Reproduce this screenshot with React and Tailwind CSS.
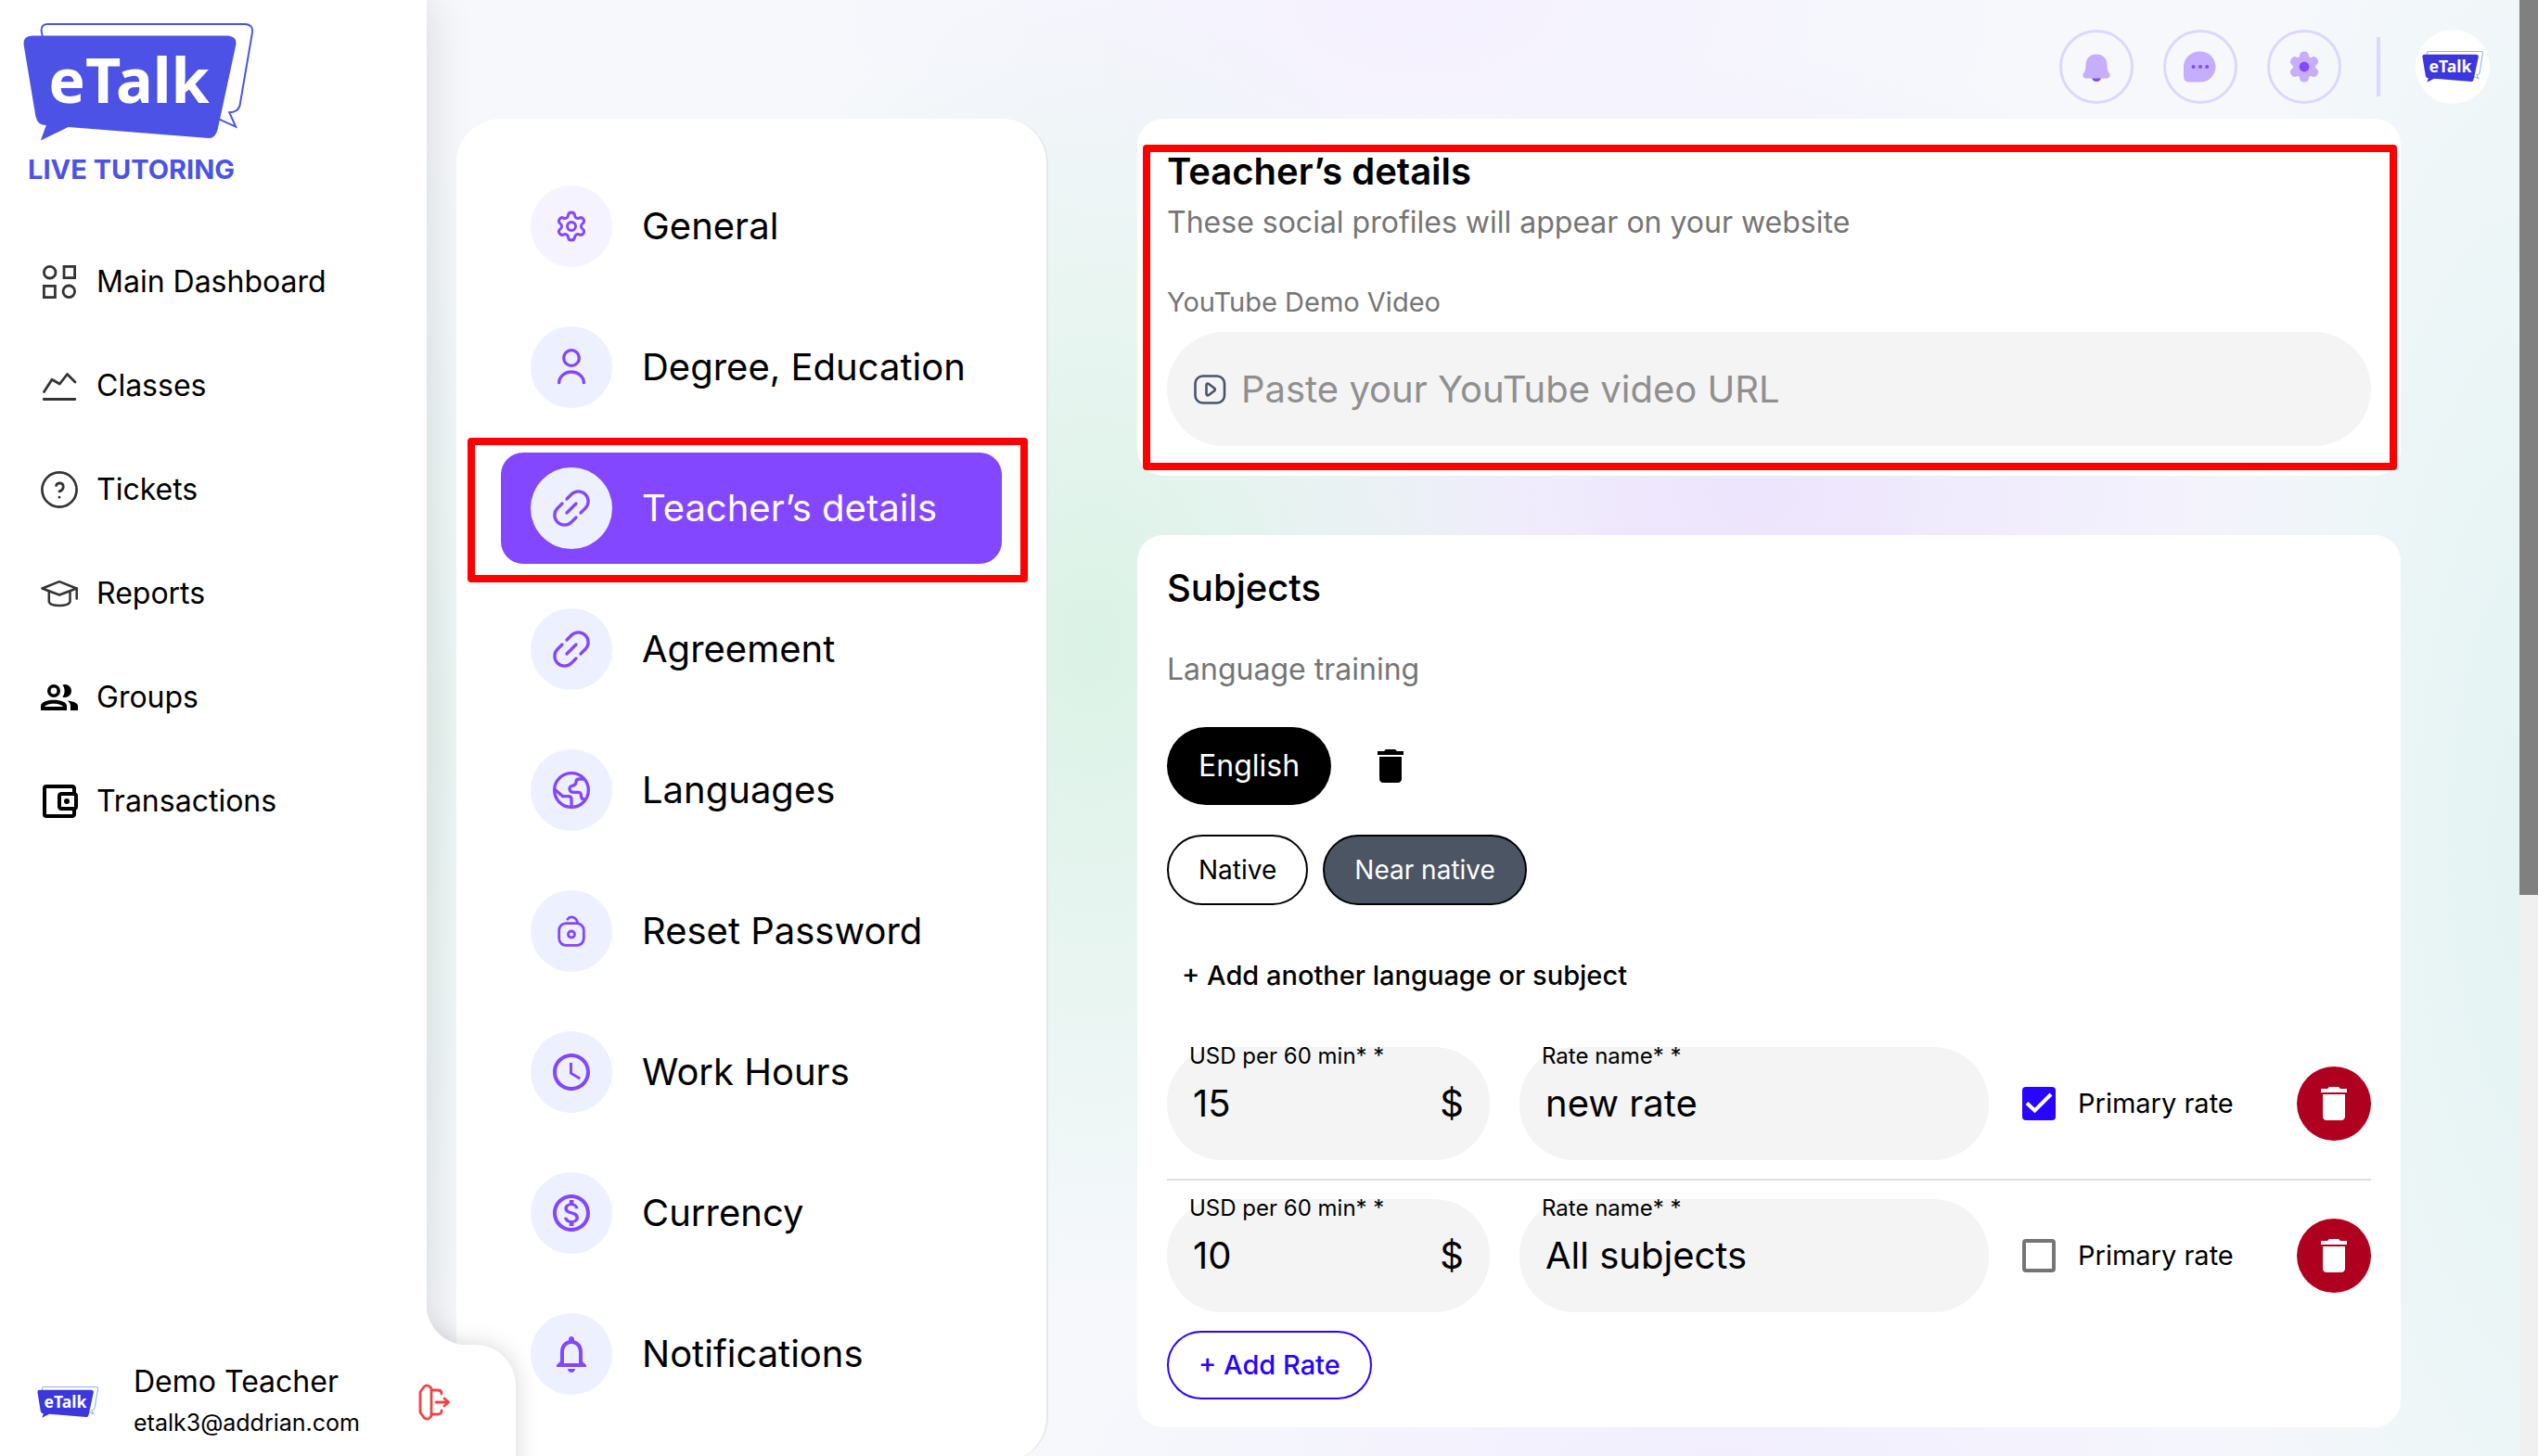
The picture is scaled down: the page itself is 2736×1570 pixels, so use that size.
import React, { useState } from 'react';
import {
  MdDelete,
  MdOutlineAccountBalanceWallet,
  MdOutlineMonetizationOn,
  MdNotificationsNone,
  MdSchedule,
} from 'react-icons/md';

const GEAR =
  'M9.671 4.136a2.34 2.34 0 0 1 4.659 0 2.34 2.34 0 0 0 3.319 1.915 2.34 2.34 0 0 1 2.33 4.033 2.34 2.34 0 0 0 0 3.831 2.34 2.34 0 0 1-2.33 4.033 2.34 2.34 0 0 0-3.319 1.915 2.34 2.34 0 0 1-4.659 0 2.34 2.34 0 0 0-3.32-1.915 2.34 2.34 0 0 1-2.33-4.033 2.34 2.34 0 0 0 0-3.831A2.34 2.34 0 0 1 6.35 6.051a2.34 2.34 0 0 0 3.319-1.915';

function Logo({ className, fill = '#4c52e5', line = '#4c52e5', lineWidth = 2 }) {
  return (
    <svg viewBox="23 23 252 130" className={className} role="img" aria-label="eTalk">
      <path
        d="M45 38 L43.7 32 Q43.5 25 51 25 L265 25 Q274 25.5 273 34 L259.5 113 Q258 120.5 248 121 L255 136.5 L236 128"
        fill="none"
        stroke={line}
        strokeWidth={lineWidth}
      />
      <path
        d="M24.5 47 Q23.5 38 34 37.5 L247 37.5 Q256.5 39 255.3 47 L235.5 139 Q233 149.5 226 149 L73 137 L43 151.5 L49 135 Q39.5 135 37.5 125 Z"
        fill={fill}
      />
      <text x="139" y="111" textAnchor="middle" fontSize="67" className="font-['Noto_Sans'] font-bold" fill="#fff">
        eTalk
      </text>
    </svg>
  );
}

function Stroke({ children, className = 'size-10', box = '0 0 24 24', width = 2 }) {
  return (
    <svg
      viewBox={box}
      className={className}
      fill="none"
      stroke="currentColor"
      strokeWidth={width}
      strokeLinecap="round"
      strokeLinejoin="round"
      aria-hidden="true"
    >
      {children}
    </svg>
  );
}

const LinkIcon = () => (
  <Stroke>
    <path d="M9 6l3-3a6.36 6.36 0 0 1 9 9l-3 3" />
    <path d="M15 18l-3 3a6.36 6.36 0 0 1-9-9l3-3" />
    <path d="M9 15l6-6" />
  </Stroke>
);

const navItems = [
  {
    label: 'Main Dashboard',
    icon: (
      <Stroke box="0 0 40 40" width={2.8}>
        <circle cx="9.7" cy="9.7" r="6.3" />
        <rect x="25" y="3.4" width="11.6" height="12.2" strokeLinejoin="miter" />
        <rect x="3.4" y="24.4" width="12" height="12.2" strokeLinejoin="miter" />
        <circle cx="30.3" cy="30.3" r="6.3" />
      </Stroke>
    ),
  },
  {
    label: 'Classes',
    icon: (
      <Stroke box="0 0 40 40" width={2.8}>
        <path d="M3.5 26.5L12 13.2L20.3 18L28.5 7.5L37 16M3.2 34.5H36.8" />
      </Stroke>
    ),
  },
  {
    label: 'Tickets',
    icon: (
      <Stroke box="0 0 40 40" width={2.7}>
        <circle cx="20" cy="20" r="18.6" />
        <path d="M16.5 15.5q1-2.6 4-2.6q3.8.3 3.8 4.200q-.4 3.8-4.300 4.800" />
        <path d="M20 28v.2" />
      </Stroke>
    ),
  },
  {
    label: 'Reports',
    icon: (
      <Stroke box="0 0 40 40" width={2.5}>
        <path d="M1.5 14.5L20 7.2L38.5 14.5L20 21.5Z" />
        <path d="M8.8 18v11q1.500 4 11.200 4t11.500-4V18M38.700 14.500v11" />
      </Stroke>
    ),
  },
  {
    label: 'Groups',
    icon: (
      <svg viewBox="2 2 20 20" className="size-10 text-black" fill="currentColor" aria-hidden="true">
        <path
          fillRule="evenodd"
          d="M9 13.4c-3.600 0-7 1.200-7 3.200V19h14v-2.400c0-2-3.400-3.200-7-3.200zM4 17c.5-.9 2.700-1.600 5-1.600s4.500.7 5 1.600zM9 12a3.500 3.500 0 1 0 0-7 3.500 3.500 0 0 0 0 7zm0-5.200a1.700 1.700 0 1 1 0 3.400 1.700 1.700 0 0 1 0-3.400z"
        />
        <path d="M16.300 13.700c1.100.8 1.700 1.700 1.700 2.900V19h4v-2.400c0-1.700-2.700-2.600-5.700-2.900zM15 12a3.500 3.500 0 0 0 0-7c-.5 0-.9.1-1.300.3.700.9 1.100 2 1.100 3.200s-.4 2.300-1.100 3.200c.4.2.8.3 1.300.3z" />
      </svg>
    ),
  },
  { label: 'Transactions', icon: <MdOutlineAccountBalanceWallet className="-m-1 size-12 text-black" /> },
];

const settingsItems = [
  {
    label: 'General',
    tint: 'bg-[#f5f3ff]',
    icon: (
      <Stroke className="size-9">
        <path d={GEAR} />
        <circle cx="12" cy="12" r="3" />
      </Stroke>
    ),
  },
  {
    label: 'Degree, Education',
    icon: (
      <Stroke>
        <circle cx="12" cy="6" r="5" />
        <path d="M4 22a8 7 0 0 1 16 0" />
      </Stroke>
    ),
  },
  { label: 'Teacher’s details', icon: <LinkIcon />, active: true },
  { label: 'Agreement', icon: <LinkIcon /> },
  {
    label: 'Languages',
    icon: (
      <Stroke>
        <circle cx="12" cy="12" r="11" />
        <path d="M1.2 11.5L6.5 16H10q2 0 2 2v5" />
        <path d="M19.500 4.800H17q-2 0-2 2t-2.500 2.400t-1.300 3.400q.8.800 2.300.8h3q1.500 0 1.700 1.600q0 3 2 3" />
      </Stroke>
    ),
  },
  {
    label: 'Reset Password',
    icon: (
      <Stroke width={1.7}>
        <rect x="4" y="7" width="16" height="14.2" rx="4.5" />
        <path d="M9.500 4.300q1-1.600 2.800-1.400q3 .3 3.700 3.800" />
        <circle cx="12" cy="14.1" r="2.1" />
      </Stroke>
    ),
  },
  { label: 'Work Hours', icon: <MdSchedule className="size-12" /> },
  { label: 'Currency', icon: <MdOutlineMonetizationOn className="size-12" /> },
  { label: 'Notifications', icon: <MdNotificationsNone className="size-12" /> },
];

function Sidebar() {
  return (
    <aside className="relative w-[460px] shrink-0 bg-white shadow-[0_0_48px_rgba(0,0,0,0.14)]">
      <a href="#home" className="block pt-6 pl-6">
        <Logo className="w-[250px]" />
        <span className="mt-2.5 ml-1.5 block text-[29px] leading-10 font-bold text-[#4c52e5]">LIVE TUTORING</span>
      </a>
      <nav className="mt-[69px] flex flex-col gap-12">
        {navItems.map((item) => (
          <a key={item.label} href="#nav" className="flex h-16 items-center gap-5 pl-11 text-[32px] text-black">
            <span className="text-[#333]">{item.icon}</span>
            {item.label}
          </a>
        ))}
      </nav>
    </aside>
  );
}

/* Pestaña inferior del menú: sobresale y tapa la tarjeta de ajustes */
function UserPanel() {
  return (
    <div className="absolute bottom-0 left-0 z-20 w-[556px]">
      <div className="absolute -top-20 -right-12 bottom-0 left-[460px] overflow-hidden pt-9 pr-12">
        <div className="h-full drop-shadow-[0_0_12px_rgba(0,0,0,0.16)]">
          <div className="size-11 bg-[radial-gradient(circle_at_100%_0,transparent_44px,white_45px)]"></div>
          <div className="h-full rounded-tr-[44px] bg-white"></div>
        </div>
      </div>
      <div className="relative flex h-[120px] items-center pt-1 pr-[68px] pl-10">
        <Logo className="w-[66px]" fill="#3c37dc" line="#8fb4dc" lineWidth={4} />
        <div className="ml-[38px] flex-1">
          <div className="text-[32px] leading-[44px]">Demo Teacher</div>
          <div className="text-[25px] leading-[44px]">etalk3@addrian.com</div>
        </div>
        <button type="button" aria-label="Log out" className="text-[#ef4444]">
          <Stroke className="size-10" box="0 0 40 40" width={2.8}>
            <path d="M5 9L9 3.500q3-3 6-.5l2 2v30l-2 2q-3 2.500-6-.5L5 31Z" />
            <path d="M17 7h7q4 0 4 4M17 33h7q4 0 4-4M22 20h13M31 16l4.500 4l-4.500 4" />
          </Stroke>
        </button>
      </div>
    </div>
  );
}

function Header() {
  const ring = 'grid size-20 place-items-center rounded-full border-[3px] border-[#ddd6fe]';
  return (
    <header className="flex h-32 shrink-0 items-center justify-end pt-4 pr-8">
      <div className="flex gap-8">
        <button type="button" aria-label="Alerts" className={ring}>
          <svg viewBox="0 0 40 40" className="size-10">
            <path d="M15 32h10q-1 4-5 4t-5-4z" fill="#8347ff" />
            <path
              d="M20 6.500c7 0 11 4.500 11.400 10.500c.3 6 .8 8 2.600 10c1.500 3-.5 5.500-3 5.500H9c-3 0-4.500-3-3-5.500c1.800-2 2.300-4 2.600-10C9 11 13 6.500 20 6.500z"
              fill="#c6aeff"
            />
          </svg>
        </button>
        <button type="button" aria-label="Messages" className={ring}>
          <svg viewBox="0 0 40 40" className="size-10">
            <path d="M20 3.500a16.500 16.500 0 0 1 0 33H8q-6 0-6-6V20A17 16.500 0 0 1 20 3.500z" fill="#c6aeff" />
            <g fill="#8347ff">
              <circle cx="12.5" cy="20" r="2" />
              <circle cx="20" cy="20" r="2" />
              <circle cx="27.2" cy="20" r="2" />
            </g>
          </svg>
        </button>
        <button type="button" aria-label="Settings" className={ring}>
          <svg viewBox="0 0 24 24" className="size-9">
            <path d={GEAR} fill="#c6aeff" stroke="#c6aeff" strokeWidth="2" />
            <circle cx="12" cy="12" r="3.6" fill="#8347ff" />
          </svg>
        </button>
      </div>
      <div className="mx-[38px] h-16 w-1 bg-[#ddd6fe]"></div>
      <a href="#profile" className="grid size-20 place-items-center rounded-full bg-white">
        <Logo className="w-[66px]" fill="#3c37dc" line="#8fb4dc" lineWidth={4} />
      </a>
    </header>
  );
}

function SettingsMenu() {
  return (
    <nav className="relative w-[638px] shrink-0 rounded-[48px] border-r-2 border-[#e5e7eb] bg-white px-12 py-10">
      {settingsItems.map((item) => (
        <div key={item.label} className="relative py-4">
          <a
            href="#settings"
            className={`flex h-[120px] items-center gap-8 rounded-3xl pl-8 text-[40px] ${
              item.active ? 'bg-[#8347ff] text-white' : 'text-black'
            }`}
          >
            <span className={`grid size-[88px] shrink-0 place-items-center rounded-full text-[#8347ff] ${item.tint || 'bg-[#edf1ff]'}`}>
              {item.icon}
            </span>
            {item.label}
          </a>
          {item.active && (
            <div className="pointer-events-none absolute top-0 -right-7 -bottom-1 -left-9 rounded-sm border-8 border-[#ff0000]"></div>
          )}
        </div>
      ))}
    </nav>
  );
}

function RateRow({ id, rate, onChange }) {
  const label = 'absolute -top-1 text-[24px] leading-7 text-black';
  return (
    <div className="flex items-center">
      <div className="relative flex h-[122px] w-[348px] items-center rounded-[60px] bg-[#f4f4f4] pr-7 pl-7">
        <label htmlFor={`${id}-price`} className={`${label} left-6`}>USD per 60 min* *</label>
        <input
          id={`${id}-price`}
          value={rate.price}
          onChange={(e) => onChange({ ...rate, price: e.target.value })}
          className="w-full min-w-0 bg-transparent text-[40px] outline-none"
        />
        <span className="text-[40px]">$</span>
      </div>
      <div className="relative ml-8 flex h-[122px] flex-1 items-center rounded-[60px] bg-[#f4f4f4] px-7">
        <label htmlFor={`${id}-name`} className={`${label} left-6`}>Rate name* *</label>
        <input
          id={`${id}-name`}
          value={rate.name}
          onChange={(e) => onChange({ ...rate, name: e.target.value })}
          className="w-full min-w-0 bg-transparent text-[40px] outline-none"
        />
      </div>
      <label className="ml-9 flex w-[296px] items-center gap-6 text-[29px]">
        <span className="relative grid size-9 place-items-center">
          <input
            type="checkbox"
            checked={rate.primary}
            onChange={(e) => onChange({ ...rate, primary: e.target.checked })}
            className="peer size-9 appearance-none rounded border-4 border-[#757575] checked:border-[#2805ff] checked:bg-[#2805ff]"
          />
          <svg viewBox="0 0 36 36" className="pointer-events-none absolute inset-0 hidden size-9 peer-checked:block">
            <path d="M5 17.5L13.5 25.5L31 8" fill="none" stroke="#fff" strokeWidth="4" />
          </svg>
        </span>
        Primary rate
      </label>
      <button type="button" aria-label="Delete rate" className="grid size-20 place-items-center rounded-full bg-[#b00020] text-white">
        <MdDelete className="size-12" />
      </button>
    </div>
  );
}

export default function App() {
  const [url, setUrl] = useState('');
  const [rates, setRates] = useState([
    { price: '15', name: 'new rate', primary: true },
    { price: '10', name: 'All subjects', primary: false },
  ]);

  const updateRate = (index, rate) => {
    setRates(rates.map((r, i) => (i === index ? rate : r)));
  };

  return (
    <div className="relative flex h-screen overflow-hidden bg-[#f6f8fc] bg-[radial-gradient(ellipse_18%_45%_at_43%_44%,#dbf2e6,transparent),radial-gradient(ellipse_24%_30%_at_69%_34%,#ede4fd,transparent),radial-gradient(ellipse_24%_24%_at_56%_0%,#f5f1ff,transparent),radial-gradient(ellipse_14%_80%_at_100%_58%,#e3f3f2,transparent),radial-gradient(ellipse_26%_14%_at_68%_100%,#f2eefe,transparent),radial-gradient(ellipse_8%_40%_at_17%_50%,#eaf6f3,transparent)] font-['Inter',sans-serif] text-black">
      <Sidebar />
      <UserPanel />

      <div className="flex min-w-0 flex-1 flex-col">
        <Header />
        <main className="flex flex-1 items-start gap-24 pr-32 pl-8">
          <SettingsMenu />

          <div className="flex min-w-0 flex-1 flex-col gap-16">
            {/* Teacher's details */}
            <section className="relative rounded-[28px] bg-white px-8 pt-8 pb-8">
              <h2 className="text-[40px] leading-[50px] font-semibold">Teacher’s details</h2>
              <p className="mt-1 text-[32px] leading-[52px] text-[#757575]">These social profiles will appear on your website</p>
              <label htmlFor="video" className="mt-[42px] block text-[29px] leading-9 text-[#757575]">YouTube Demo Video</label>
              <div className="mt-3.5 flex h-[123px] items-center gap-4 rounded-[62px] bg-[#f4f4f4] pr-8 pl-7">
                <Stroke className="size-9 shrink-0 text-[#475569]" box="0 0 36 36" width={2.6}>
                  <rect x="2.5" y="3.5" width="31.5" height="29" rx="8" />
                  <path d="M14.500 13v10q.5 2 2.500 1l6-4.500q1.500-1.500 0-3l-6-4.500q-2-1-2.500 1z" />
                </Stroke>
                <input
                  id="video"
                  type="url"
                  value={url}
                  onChange={(e) => setUrl(e.target.value)}
                  placeholder="Paste your YouTube video URL"
                  className="w-full bg-transparent text-[40px] outline-none placeholder:text-[#8f8f8f]"
                />
              </div>
              <div className="pointer-events-none absolute top-7 right-1 bottom-1.5 left-1.5 rounded-sm border-8 border-[#ff0000]"></div>
            </section>

            {/* Subjects */}
            <section className="rounded-[28px] bg-white px-8 pt-7 pb-[30px]">
              <h2 className="text-[40px] leading-[58px] font-medium">Subjects</h2>
              <p className="mt-[33px] text-[32px] leading-[52px] text-[#757575]">Language training</p>

              <div className="mt-9 flex items-center gap-10">
                <button type="button" className="h-[84px] rounded-full bg-black px-[34px] text-[32px] text-white">English</button>
                <button type="button" aria-label="Delete language">
                  <MdDelete className="size-12" />
                </button>
              </div>

              <div className="mt-8 flex gap-4 text-[28px]">
                <button type="button" className="h-[76px] rounded-full border-2 border-black px-8">Native</button>
                <button type="button" className="h-[76px] rounded-full border-2 border-black bg-[#4b5563] px-8 text-white">Near native</button>
              </div>

              <button type="button" className="mt-12 ml-4 block h-14 text-[29px] font-medium">+ Add another language or subject</button>

              <div className="mt-[49px] flex flex-col divide-y-2 divide-[#e0e0e0]">
                {rates.map((rate, index) => (
                  <div key={index} className="pb-5 not-first:pt-5">
                    <RateRow id={`rate-${index}`} rate={rate} onChange={(next) => updateRate(index, next)} />
                  </div>
                ))}
              </div>

              <button
                type="button"
                onClick={() => setRates([...rates, { price: '', name: '', primary: false }])}
                className="h-[74px] rounded-full border-2 border-[#2805ff] px-8 text-[29px] font-medium text-[#2805ff]"
              >
                + Add Rate
              </button>
            </section>
          </div>
        </main>
      </div>

      {/* Barra de desplazamiento */}
      <div className="w-5 shrink-0 bg-[#f0f0f0]">
        <div className="h-[965px] bg-[#808080]"></div>
      </div>
    </div>
  );
}
